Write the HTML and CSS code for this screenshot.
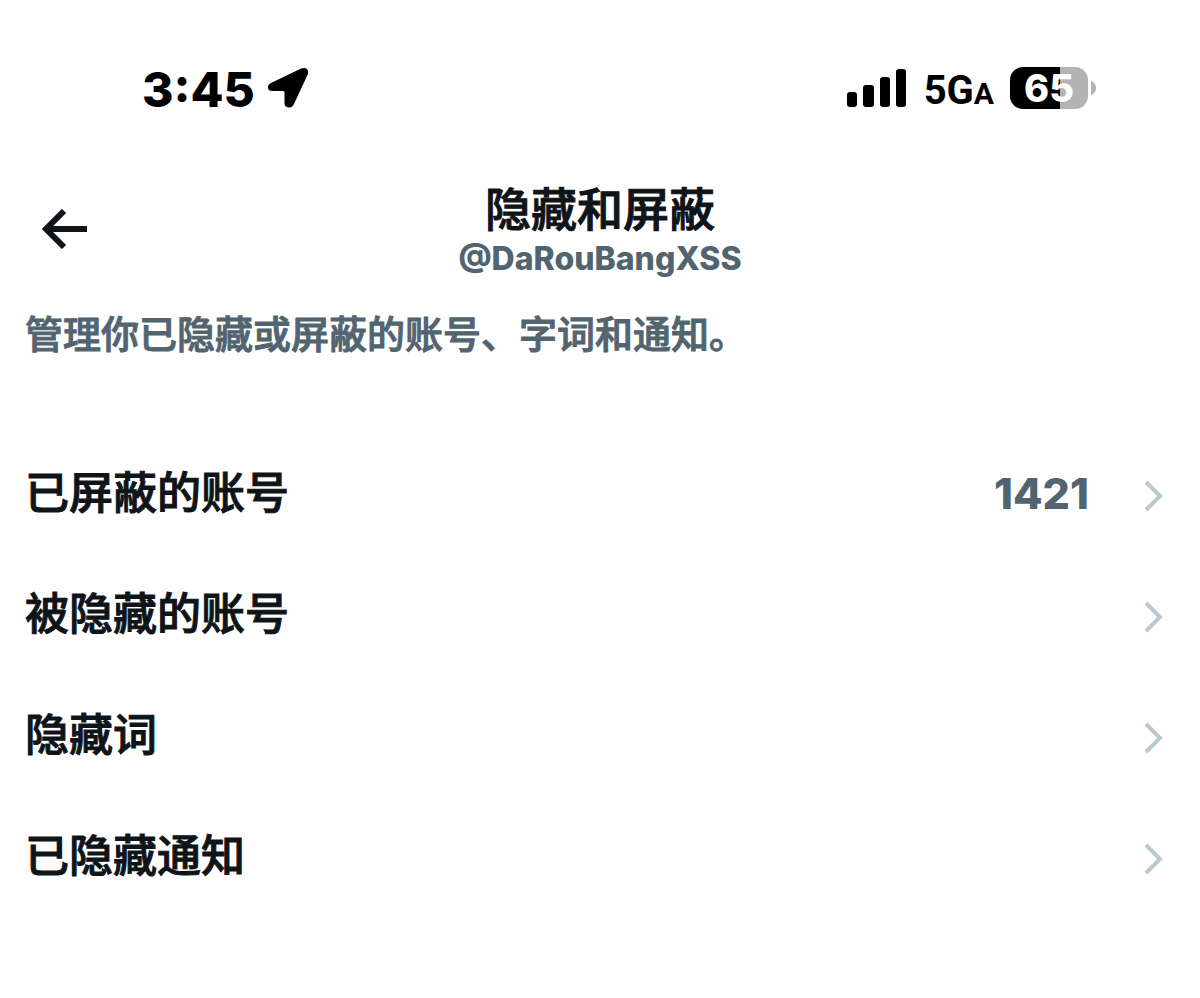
FILE: index.html
```html
<!DOCTYPE html>
<html lang="zh-CN">
<head>
<meta charset="utf-8">
<meta name="viewport" content="width=device-width, initial-scale=1">
<title>隐藏和屏蔽</title>
<link rel="stylesheet" href="styles.css">
</head>
<body>
<div class="status">
  <div class="status-side">
    <span class="time">3:45</span>
    <svg class="location" viewBox="0 0 42 42" aria-hidden="true"><path d="M4 16 33 2Q37.500 .2 40 2Q42.200 4.500 40 9L27 37Q25 41 21.500 40.500Q17.500 40 17.500 36V25.500Q17.500 24 16 24H5Q1.500 24 1 21Q.5 17.500 4 16Z"/></svg>
  </div>
  <div class="status-side">
    <svg class="signal" viewBox="0 0 60 38" aria-hidden="true"><rect x="0" y="23" width="10" height="15" rx="3"/><rect x="16" y="16" width="11" height="22" rx="3"/><rect x="33" y="8" width="10" height="30" rx="3"/><rect x="49" y="0" width="10" height="38" rx="3"/></svg>
    <span class="network">5G<span class="network-suffix">A</span></span>
    <div class="battery"><span class="battery-body">65</span><svg class="battery-tip" viewBox="0 0 5 14" aria-hidden="true"><path d="M0 0Q5 2 5 7T0 14Z"/></svg></div>
  </div>
</div>
<header class="header">
  <button class="back" type="button" aria-label="返回"><svg viewBox="0 0 46 40" aria-hidden="true"><path d="M22 2 4 20 22 38M4 20H45"/></svg></button>
  <div class="heading">
    <h1 class="title">隐藏和屏蔽</h1>
    <p class="handle">@DaRouBangXSS</p>
  </div>
</header>
<main>
  <p class="description">管理你已隐藏或屏蔽的账号、字词和通知。</p>
  <nav class="list">
    <a class="row" href="#blocked"><span class="label">已屏蔽的账号</span><span class="count">1421</span><svg class="chevron" viewBox="0 0 20 32" aria-hidden="true"><path d="M3 2 17 16 3 30"/></svg></a>
    <a class="row" href="#muted"><span class="label">被隐藏的账号</span><svg class="chevron" viewBox="0 0 20 32" aria-hidden="true"><path d="M3 2 17 16 3 30"/></svg></a>
    <a class="row" href="#words"><span class="label">隐藏词</span><svg class="chevron" viewBox="0 0 20 32" aria-hidden="true"><path d="M3 2 17 16 3 30"/></svg></a>
    <a class="row" href="#notifications"><span class="label">已隐藏通知</span><svg class="chevron" viewBox="0 0 20 32" aria-hidden="true"><path d="M3 2 17 16 3 30"/></svg></a>
  </nav>
</main>
</body>
</html>
```
FILE: styles.css
```css
* { box-sizing: border-box; }
body { margin: 0; background: #fefefe; color: #0f1419; font-family: Inter, "Noto Sans CJK SC", sans-serif; }
h1, p { margin: 0; }
.status { display: flex; align-items: center; justify-content: space-between; padding: 56px 104px 0 142px; color: #000; height: 120px; }
.status-side { display: flex; align-items: center; }
.time { font-size: 48px; font-weight: 800; line-height: 60px; padding-top: 4px; }
.location { width: 42px; height: 42px; margin-left: 12px; }
.signal { width: 60px; height: 38px; margin-right: 17px; }
.network { font-family: Roboto, sans-serif; font-size: 40px; font-weight: 700; line-height: 56px; padding-top: 8px; margin-right: 16px; }
.network-suffix { font-size: 30px; }
.battery { display: flex; align-items: center; gap: 3px; }
.battery-body { width: 78px; height: 42px; border-radius: 13px; background: linear-gradient(90deg, #000 64%, #b3b3b3 64%); color: #fff; font-size: 38px; font-weight: 800; line-height: 42px; text-align: center; }
.battery-tip { width: 5px; height: 14px; fill: #b3b3b3; }
.header { display: grid; grid-template-columns: 88px 1fr 88px; align-items: center; padding-top: 59px; }
.back { display: flex; justify-self: end; padding: 0; border: 0; background: none; }
.back svg { width: 46px; height: 40px; fill: none; stroke: #0f1419; stroke-width: 6px; }
.heading { text-align: center; }
.title { font-size: 46px; font-weight: 500; line-height: 60px; -webkit-text-stroke: 1px currentColor; }
.handle { color: #536471; font-size: 32px; font-weight: 800; line-height: 40px; }
.description { padding: 29px 25px 0; color: #536471; font-size: 38px; font-weight: 500; line-height: 52px; -webkit-text-stroke: 1px currentColor; }
.list { padding-top: 75px; }
.row { display: flex; align-items: center; height: 121px; padding: 0 37px 0 25px; color: #0f1419; text-decoration: none; font-size: 44px; font-weight: 500; }
.label { flex: 1; padding-bottom: 12px; -webkit-text-stroke: 1px currentColor; }
.count { color: #536471; font-size: 43px; font-weight: 800; margin-right: 54px; padding-bottom: 6px; }
.chevron { width: 20px; height: 32px; fill: none; stroke: #b9c9d0; stroke-width: 4px; }
```
